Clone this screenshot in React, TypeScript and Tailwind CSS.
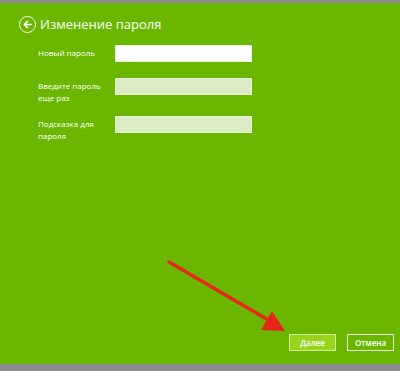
import React from 'react';

const fields = [
  { label: ['Новый пароль'], filled: true, mt: 'mt-[12px]' },
  { label: ['Введите пароль', 'еще раз'], filled: false, mt: 'mt-[16px]' },
  { label: ['Подсказка для', 'пароля'], filled: false, mt: 'mt-[12px]' },
];

const App: React.FC = () => {
  return (
    <div
      className="relative flex h-[371px] w-[400px] flex-col overflow-hidden bg-[#8c8c8c]"
      style={{ fontFamily: '"Open Sans", "Noto Sans", sans-serif' }}
    >
      <div className="h-[3px]" />
      <div className="flex flex-1 flex-col bg-[#6bb600] text-white">
        {/* header */}
        <div className="mt-[13px] flex items-center pl-[19px]">
          <div className="flex h-[17px] w-[17px] items-center justify-center rounded-full border-[1.5px] border-white">
            <svg width="11" height="11" viewBox="0 0 12 12">
              <path d="M10 6H2.5M6 2.5L2.5 6 6 9.5" fill="none" stroke="white" strokeWidth="1.8" strokeLinecap="round" strokeLinejoin="round" />
            </svg>
          </div>
          <span className="ml-[4px] text-[13px] leading-none">Изменение пароля</span>
        </div>

        {/* form */}
        <div className="flex flex-col pl-[38px]">
          {fields.map((f, i) => (
            <div key={i} className={`flex items-start ${f.mt}`}>
              <div className="w-[77px] pt-[2px] text-[8px] leading-[12px]">
                {f.label.map((l) => (
                  <div key={l}>{l}</div>
                ))}
              </div>
              <div
                className={`h-[17px] w-[137px] border border-[#e8f3d8] ${
                  f.filled ? 'bg-white' : 'bg-[#dbecc4]'
                }`}
              />
            </div>
          ))}
        </div>

        {/* buttons */}
        <div className="mt-auto mb-[13px] flex justify-end gap-[11px] pr-[6px]">
          <button className="h-[17px] w-[47px] border border-[#d6f09a] bg-[#98d41c] text-[8px] font-semibold leading-none text-white">
            Далее
          </button>
          <button className="h-[17px] w-[47px] border-[1.5px] border-[#eef7e0] bg-[#6bb600] text-[8px] font-semibold leading-none text-white">
            Отмена
          </button>
        </div>
      </div>
      <div className="h-[7px]" />

      {/* red annotation arrow */}
      <svg className="pointer-events-none absolute left-0 top-0" width="400" height="371">
        <line x1="169" y1="262" x2="270" y2="321" stroke="#e8261a" strokeWidth="3.5" strokeLinecap="round" />
        <polygon points="285,331 261,330 272,311" fill="#e8261a" />
      </svg>
    </div>
  );
};

export default App;
